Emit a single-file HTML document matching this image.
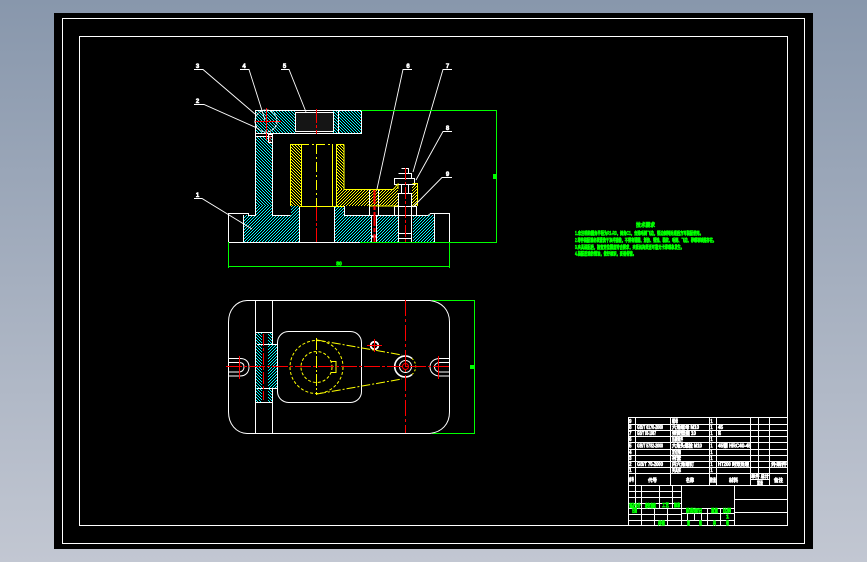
<!DOCTYPE html>
<html><head><meta charset="utf-8">
<style>
html,body{margin:0;padding:0;width:867px;height:562px;overflow:hidden;background:linear-gradient(180deg,#8897ac,#c2c7d2)}
svg{display:block;position:absolute;left:0;top:0}
text{font-family:"Liberation Sans","Noto Sans CJK SC",sans-serif;font-weight:bold}
.w{fill:#fff;stroke:#fff;stroke-width:.6}
.g{fill:#00ff00;stroke:#00ff00;stroke-width:.6}
</style></head><body>
<svg width="867" height="562" viewBox="0 0 867 562" shape-rendering="crispEdges">
<defs>
<pattern id="hb" patternUnits="userSpaceOnUse" width="3" height="3"><rect width="3" height="3" fill="#000"/><path d="M0 0h1v1h-1zM1 1h1v1h-1zM2 2h1v1h-1z" fill="#00ffff"/></pattern>
<pattern id="hf" patternUnits="userSpaceOnUse" width="3" height="3"><rect width="3" height="3" fill="#000"/><path d="M2 0h1v1h-1zM1 1h1v1h-1zM0 2h1v1h-1z" fill="#00ffff"/></pattern>
<pattern id="yb" patternUnits="userSpaceOnUse" width="3" height="3"><rect width="3" height="3" fill="#000"/><path d="M0 0h1v1h-1zM1 1h1v1h-1zM2 2h1v1h-1z" fill="#ffff00"/></pattern>
<pattern id="yf" patternUnits="userSpaceOnUse" width="3" height="3"><rect width="3" height="3" fill="#000"/><path d="M2 0h1v1h-1zM1 1h1v1h-1zM0 2h1v1h-1z" fill="#ffff00"/></pattern>
</defs>
<rect x="54" y="13" width="759" height="536" fill="#000"/>
<g fill="none" stroke="#fff">
<rect x="62.5" y="18.5" width="742" height="525"/>
<rect x="79.5" y="36.5" width="708" height="489"/>
</g>

<!-- FRONT VIEW hatching -->
<rect x="256" y="111" width="39" height="22" fill="url(#hb)"/>
<rect x="333" y="111" width="28" height="22" fill="url(#hb)"/>
<rect x="256" y="136" width="16" height="79" fill="url(#hb)"/>
<rect x="243" y="215" width="56" height="27" fill="url(#hf)"/>
<rect x="256" y="206" width="16" height="9" fill="url(#hf)"/>
<rect x="291" y="206" width="8" height="9" fill="url(#hf)"/>
<rect x="335" y="215" width="36" height="27" fill="url(#hf)"/>
<rect x="335" y="206" width="9" height="9" fill="url(#hf)"/>
<rect x="377" y="215" width="21" height="27" fill="url(#hf)"/>
<rect x="413" y="215" width="21" height="27" fill="url(#hf)"/>
<rect x="291" y="144" width="10" height="62" fill="url(#yb)"/>
<rect x="336" y="144" width="8" height="46" fill="url(#yb)"/>
<path d="M336 189H393L398 184V206H336Z" fill="url(#yf)"/>
<rect x="412" y="183" width="5" height="23" fill="url(#yf)"/>
<rect x="295" y="112" width="38" height="19" fill="#151515"/>

<!-- FRONT VIEW white -->
<g fill="none" stroke="#fff">
<path d="M255.5 110.5H361.5V133.5H255.5ZM255.5 133V215.5H248.5V213.5H228.5V242.5H449.5V213.5H430.5L428 215.5H344.5V206.5H299.5V242M272.5 133V215.5H290.5"/>
<path d="M255.5 136.5H272.5M243.5 215V242M334.5 206V242M434.5 214V242M338.5 111V133"/>
<rect x="295.5" y="112.5" width="38" height="19"/>
<path d="M268.5 134.5H272.5V142.5H268.5Z"/>
<path d="M369.5 189V215M378.5 189V215M371.5 215V242M376.5 215V242M369.5 189.5H378.5"/>
<path d="M394.5 206.5H416.5V215.5H394.5ZM398.5 193.5H411.5V242M398.5 193V242M398.5 233.5H411.5M398.5 238.5H411.5"/>
<path d="M394.5 178.5H414.5V184.5H394.5ZM398.5 173.5H411.5V178M401.5 168.5H408.5V173M401.5 184V193M408.5 184V193"/>
<path d="M371 236.5H377" stroke-width="2"/>
</g>
<!-- yellow -->
<g fill="none" stroke="#ffff00">
<path d="M290.5 206V144.5H301.5V206M332.5 144V206M336.5 144V206M344 144.5H336M344 144.5V189.5H393L398 184V189M344 206.5H299M398 206H369"/>
<path d="M316.5 144V206" stroke-dasharray="10 3 2 3"/>
<path d="M301 144.5H332" stroke-dasharray="8 3 2 3"/>
<path d="M412.5 183.5H417.5V206"/>
</g>
<!-- red center lines -->
<g fill="none" stroke="#ff0000">
<path d="M316.5 109V134" stroke-dasharray="14 2 3 2"/>
<path d="M316.5 207V242" stroke-dasharray="14 2 3 2"/>
<path d="M405.5 168V242" stroke-dasharray="12 2 3 2"/>
<path d="M374.5 190V242" stroke-width="2" stroke-dasharray="14 2 4 2"/>
<path d="M266.5 108V140M255 121.5H281M270 136V142"/>
</g>
<circle cx="266" cy="121" r="11" fill="none" stroke="#fff" stroke-dasharray="3 1" shape-rendering="auto"/>
<!-- leaders -->
<g fill="none" stroke="#fff" shape-rendering="auto" stroke-width=".9">
<path d="M194 69.5H203L255 114"/>
<path d="M194 104.5H204L257 128"/>
<path d="M240 69.5H249L265 120"/>
<path d="M281 69.5H289L306 112"/>
<path d="M412 69.5H403L377 189"/>
<path d="M452 69.5H443L413 172"/>
<path d="M452 131.5H443L416 180"/>
<path d="M452 177.5H442L413 207"/>
<path d="M194 198.5H202L252 229"/>
</g>
<g font-size="6" text-anchor="middle">
<text class="w" x="197.5" y="68">3</text><text class="w" x="244" y="68">4</text><text class="w" x="284.5" y="68">5</text>
<text class="w" x="408" y="68">6</text><text class="w" x="447.5" y="68">7</text><text class="w" x="447.5" y="130">8</text>
<text class="w" x="447.5" y="176">9</text><text class="w" x="197.5" y="103">2</text><text class="w" x="197.5" y="197">1</text>
</g>
<!-- green dims -->
<g fill="none" stroke="#00ff00">
<path d="M361 110.5H497M496.5 110V243M360 242.5H497M228.5 242V268M449.5 242V268M228 266.5H450"/>
<path d="M432 300.5H475M474.5 300V434M432 433.5H475"/>
</g>
<rect x="493" y="174" width="3" height="5" fill="#00ff00"/>
<text class="g" x="339" y="265.5" font-size="5" text-anchor="middle">80</text>
<rect x="470" y="365" width="4" height="4" fill="#00ff00"/>

<!-- PLAN VIEW -->
<rect x="256" y="332" width="6" height="70" fill="url(#hb)"/>
<rect x="268" y="332" width="4" height="70" fill="url(#hb)"/>
<rect x="268" y="344" width="9" height="44" fill="url(#hf)"/>
<g fill="none" stroke="#fff">
<path d="M247 300.5H430C442 302 449.5 310 449.5 322V412C449.5 424 442 432 430 433.5H247C236 433 228.5 424 228.5 412V322C228.5 310 236 301 247 300.5Z" shape-rendering="auto"/>
<path d="M255.5 300V433M272.5 300V344M272.5 388V433M256 332.5H272M256 402.5H272M268 344.5H277M268 388.5H277M257 344.5H268M257 388.5H268" />
<rect x="277.5" y="331.5" width="84" height="71" rx="11" shape-rendering="auto"/>
<g shape-rendering="auto">
<path d="M228 358.5H240C246 358.5 249 362 249 367C249 372 246 376 240 376H228"/>
<path d="M228 362.5H239C242 362.5 244 364 244 367C244 370 242 372 239 372H228"/>
<path d="M450 358.5H440C434 358.5 430 362 430 367C430 372 434 376 440 376H450"/>
<path d="M450 362.5H440C437 362.5 434.5 364 434.5 367C434.5 370 437 372 440 372H450"/>
<path d="M412 358.500A10.500 10.500 0 1 0 412 374.500" stroke-width="1.600"/>
<circle cx="405.5" cy="366.5" r="6"/>
<circle cx="374.5" cy="345.5" r="3.8" stroke-width="1.8"/>
</g>
</g>
<g fill="none" stroke="#ffff00" shape-rendering="auto">
<circle cx="316.5" cy="367" r="26.5" stroke-dasharray="3 2"/>
<circle cx="316.5" cy="367" r="15.5" stroke-dasharray="3 2"/>
<path d="M317 340L402 355M317 394L402 379" stroke-dasharray="9 2 2 2"/>
<path d="M331 361.5H336V372.500H331"/>
<path d="M316.5 338V395" stroke-dasharray="12 2 2 2"/>
<path d="M412 358.500A10.500 10.500 0 0 1 412 374.500" stroke-dasharray="2 2"/>
</g>
<g fill="none" stroke="#ff0000">
<path d="M226 366.5H450" stroke-dasharray="16 2 3 2"/>
<path d="M405.5 300V433" stroke-dasharray="16 3 3 3"/>
<path d="M263.5 334V400" stroke-dasharray="12 2 3 2"/>
<path d="M239.5 356V379M438.5 356V379M374.5 339V352M367 345.5H382"/>
<circle cx="405.5" cy="366.5" r="3" shape-rendering="auto"/>
</g>

<!-- technical requirements -->
<text class="g" x="636" y="227" font-size="5.5" textLength="19" lengthAdjust="spacingAndGlyphs">技术要求</text>
<text class="g" x="575" y="235" font-size="5" textLength="128" lengthAdjust="spacingAndGlyphs">1.未注明的圆角半径为R1-R3，倒角C1，去除毛刺飞边，锐边倒钝处理后方可装配使用。</text>
<text class="g" x="575" y="242" font-size="5" textLength="141" lengthAdjust="spacingAndGlyphs">2.零件装配前必须清洗干净并检验，不得有磕碰、划伤、锈蚀、裂纹、毛刺、飞边、砂眼等缺陷存在。</text>
<text class="g" x="575" y="249" font-size="5" textLength="109" lengthAdjust="spacingAndGlyphs">3.夹具装配后，检查定位精度符合要求，夹紧机构灵活可靠无卡滞现象发生。</text>
<text class="g" x="575" y="255.5" font-size="5" textLength="61" lengthAdjust="spacingAndGlyphs">4.装配后涂防锈油，做好标识，妥善保管。</text>

<!-- TITLE BLOCK -->
<g fill="none" stroke="#fff">
<path d="M628.5 417.5H787M628.5 424.5H787M628.5 430.5H787M628.5 436.5H787M628.5 442.5H787M628.5 449.5H787M628.5 455.5H787M628.5 461.5H787M628.5 467.5H787M628.5 473.5H787M628.5 485.5H787"/>
<path d="M628.5 417V525M635.5 417V485M670.5 417V485M709.5 417V485M716.5 417V485M750.5 417V485M758.5 417V479M769.5 417V485M750.5 479.5H769.5"/>
<path d="M681.5 485V525M734.5 485V525M734.5 499.5H787M734.5 512.5H787"/>
<path d="M628.5 491.5H681M628.5 497.5H681M628.5 503.5H681M628.5 508.5H681M628.5 514.5H681M628.5 520.5H681"/>
<path d="M635.5 485V508M641.5 485V525M659.5 485V508M672.5 485V508M654.5 508V525M667.5 508V525"/>
<path d="M681.5 508.5H734M681.5 513.5H734M681.5 520.5H734M687.5 513V520M694.5 513V520M701.5 513V520M707.5 508V525M720.5 508V525"/>
</g>
<g font-size="5">
<text class="w" x="629" y="423" textLength="2.5" lengthAdjust="spacingAndGlyphs">9</text>
<text class="w" x="629" y="429" textLength="2.5" lengthAdjust="spacingAndGlyphs">8</text>
<text class="w" x="629" y="435" textLength="2.5" lengthAdjust="spacingAndGlyphs">7</text>
<text class="w" x="629" y="441" textLength="2.5" lengthAdjust="spacingAndGlyphs">6</text>
<text class="w" x="629" y="447.5" textLength="2.5" lengthAdjust="spacingAndGlyphs">5</text>
<text class="w" x="629" y="454" textLength="2.5" lengthAdjust="spacingAndGlyphs">4</text>
<text class="w" x="629" y="460" textLength="2.5" lengthAdjust="spacingAndGlyphs">3</text>
<text class="w" x="629" y="466" textLength="2.5" lengthAdjust="spacingAndGlyphs">2</text>
<text class="w" x="629" y="472" textLength="2.5" lengthAdjust="spacingAndGlyphs">1</text>
<text class="w" x="710.5" y="423" textLength="2" lengthAdjust="spacingAndGlyphs">1</text>
<text class="w" x="710.5" y="429" textLength="2" lengthAdjust="spacingAndGlyphs">1</text>
<text class="w" x="710.5" y="435" textLength="2" lengthAdjust="spacingAndGlyphs">1</text>
<text class="w" x="710.5" y="441" textLength="2" lengthAdjust="spacingAndGlyphs">1</text>
<text class="w" x="710.5" y="447.5" textLength="2" lengthAdjust="spacingAndGlyphs">1</text>
<text class="w" x="710.5" y="454" textLength="2" lengthAdjust="spacingAndGlyphs">1</text>
<text class="w" x="710.5" y="460" textLength="2" lengthAdjust="spacingAndGlyphs">1</text>
<text class="w" x="710.5" y="466" textLength="2" lengthAdjust="spacingAndGlyphs">1</text>
<text class="w" x="710.5" y="472" textLength="2" lengthAdjust="spacingAndGlyphs">1</text>
<text class="w" x="672" y="423" textLength="6" lengthAdjust="spacingAndGlyphs">螺母</text>
<text class="w" x="637" y="429" textLength="26" lengthAdjust="spacingAndGlyphs">GB/T 6170-2000</text>
<text class="w" x="672" y="429" textLength="27" lengthAdjust="spacingAndGlyphs">六角螺母 M10</text>
<text class="w" x="718" y="429" textLength="5" lengthAdjust="spacingAndGlyphs">45</text>
<text class="w" x="637" y="435" textLength="19" lengthAdjust="spacingAndGlyphs">GB/T 93-1987</text>
<text class="w" x="672" y="435" textLength="24" lengthAdjust="spacingAndGlyphs">弹簧垫圈 10</text>
<text class="w" x="718" y="435" textLength="3" lengthAdjust="spacingAndGlyphs">65</text>
<text class="w" x="672" y="441" textLength="11" lengthAdjust="spacingAndGlyphs">压板组件</text>
<text class="w" x="637" y="447.5" textLength="26" lengthAdjust="spacingAndGlyphs">GB/T 5782-2000</text>
<text class="w" x="672" y="447.5" textLength="30" lengthAdjust="spacingAndGlyphs">六角头螺栓 M10</text>
<text class="w" x="718" y="447.5" textLength="33" lengthAdjust="spacingAndGlyphs">45钢 HRC40-45</text>
<text class="w" x="672" y="454" textLength="9" lengthAdjust="spacingAndGlyphs">定位销</text>
<text class="w" x="672" y="460" textLength="9" lengthAdjust="spacingAndGlyphs">衬套</text>
<text class="w" x="637" y="466" textLength="26" lengthAdjust="spacingAndGlyphs">GB/T 70-2000</text>
<text class="w" x="672" y="466" textLength="22" lengthAdjust="spacingAndGlyphs">内六角螺钉</text>
<text class="w" x="718" y="466" textLength="31" lengthAdjust="spacingAndGlyphs">HT200 时效处理</text>
<text class="w" x="771" y="466" textLength="16" lengthAdjust="spacingAndGlyphs">外购件</text>
<text class="w" x="672" y="472" textLength="9" lengthAdjust="spacingAndGlyphs">夹具体</text>
<text class="w" x="629" y="481.5" textLength="5" lengthAdjust="spacingAndGlyphs">序号</text>
<text class="w" x="648" y="482" textLength="9" lengthAdjust="spacingAndGlyphs">代号</text>
<text class="w" x="686" y="482" textLength="8" lengthAdjust="spacingAndGlyphs">名称</text>
<text class="w" x="710" y="482" textLength="6" lengthAdjust="spacingAndGlyphs">数量</text>
<text class="w" x="729" y="482" textLength="9" lengthAdjust="spacingAndGlyphs">材料</text>
<text class="w" x="751" y="478" textLength="18" lengthAdjust="spacingAndGlyphs">单件 总计</text>
<text class="w" x="757" y="485" textLength="6" lengthAdjust="spacingAndGlyphs">重量</text>
<text class="w" x="774" y="482" textLength="9" lengthAdjust="spacingAndGlyphs">备注</text>
</g>
<g font-size="5">
<text class="g" x="629" y="507.5" textLength="12" lengthAdjust="spacingAndGlyphs">设计</text>
<text class="g" x="645" y="507.5" textLength="11" lengthAdjust="spacingAndGlyphs">校核</text>
<text class="g" x="662" y="507" textLength="7" lengthAdjust="spacingAndGlyphs">工艺</text>
<text class="g" x="674" y="507" textLength="6" lengthAdjust="spacingAndGlyphs">标准</text>
<text class="g" x="632" y="512.5" textLength="5" lengthAdjust="spacingAndGlyphs">日期</text>
<text class="g" x="686" y="512.5" textLength="16" lengthAdjust="spacingAndGlyphs">阶段标记</text>
<text class="g" x="711" y="512.5" textLength="7" lengthAdjust="spacingAndGlyphs">重量</text>
<text class="g" x="723" y="512.5" textLength="8" lengthAdjust="spacingAndGlyphs">比例</text>
<text class="g" x="726" y="518.5" textLength="3" lengthAdjust="spacingAndGlyphs">1</text>
<text class="g" x="658" y="525" textLength="7" lengthAdjust="spacingAndGlyphs">共张</text>
<text class="g" x="687" y="525" textLength="3" lengthAdjust="spacingAndGlyphs">第</text>
<text class="g" x="699" y="525" textLength="3" lengthAdjust="spacingAndGlyphs">张</text>
<text class="g" x="713" y="525" textLength="3" lengthAdjust="spacingAndGlyphs">共</text>
<text class="g" x="726" y="525" textLength="3" lengthAdjust="spacingAndGlyphs">张</text>
</g>
</svg>
</body></html>
